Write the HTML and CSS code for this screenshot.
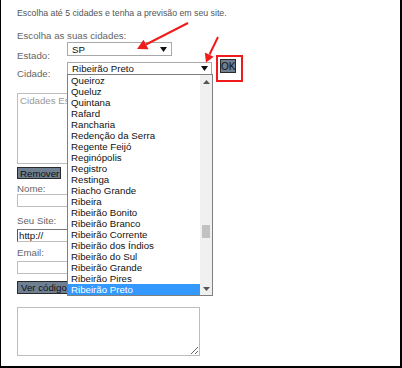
FILE: index.html
```html
<!DOCTYPE html>
<html>
<head>
<meta charset="utf-8">
<link rel="stylesheet" href="styles.css">
</head>
<body>
<div class="frame">
  <div class="form">
    <p class="intro">Escolha até 5 cidades e tenha a previsão em seu site.</p>
    <p class="title">Escolha as suas cidades:</p>
    <div class="row row-estado">
      <span class="label">Estado:</span>
      <div class="select select-sp"><span>SP</span><svg class="caret" width="7" height="5" viewBox="0 0 7 5"><path d="M0 0H7L3.5 5Z"/></svg></div>
    </div>
    <div class="row row-cidade">
      <span class="label">Cidade:</span>
      <div class="select select-cidade"><span>Ribeirão Preto</span><svg class="caret" width="7" height="5" viewBox="0 0 7 5"><path d="M0 0H7L3.5 5Z"/></svg></div>
      <button class="btn btn-ok">OK</button>
    </div>
    <textarea class="area area-cidades" placeholder="Cidades Escolhidas"></textarea>
    <button class="btn btn-remover">Remover</button>
    <p class="field-label lbl-nome">Nome:</p>
    <input class="field" type="text">
    <p class="field-label lbl-site">Seu Site:</p>
    <input class="field field-site" type="text" value="http://">
    <p class="field-label lbl-email">Email:</p>
    <input class="field" type="text">
    <button class="btn btn-ver">Ver código</button>
    <textarea class="area area-code"></textarea>
  </div>

  <div class="dropdown">
    <ul class="options">
      <li>Queiroz</li>
      <li>Queluz</li>
      <li>Quintana</li>
      <li>Rafard</li>
      <li>Rancharia</li>
      <li>Redenção da Serra</li>
      <li>Regente Feijó</li>
      <li>Reginópolis</li>
      <li>Registro</li>
      <li>Restinga</li>
      <li>Riacho Grande</li>
      <li>Ribeira</li>
      <li>Ribeirão Bonito</li>
      <li>Ribeirão Branco</li>
      <li>Ribeirão Corrente</li>
      <li>Ribeirão dos Índios</li>
      <li>Ribeirão do Sul</li>
      <li>Ribeirão Grande</li>
      <li>Ribeirão Pires</li>
      <li class="selected">Ribeirão Preto</li>
    </ul>
    <div class="scrollbar">
      <svg class="sb-arrow" width="7" height="4" viewBox="0 0 7 4"><path d="M0 4H7L3.5 0Z"/></svg>
      <div class="sb-track"><div class="sb-thumb"></div></div>
      <svg class="sb-arrow" width="7" height="4" viewBox="0 0 7 4"><path d="M0 0H7L3.5 4Z"/></svg>
    </div>
  </div>

  <div class="redbox"></div>

  <svg class="arrows" width="402" height="368" viewBox="0 0 402 368">
    <line x1="188" y1="23" x2="146" y2="44.5" stroke="#ee1c1c" stroke-width="2"/>
    <path d="M137 49 L143.5 39.8 L148.5 49.3 Z" fill="#ee1c1c"/>
    <line x1="218" y1="37" x2="209.5" y2="54.5" stroke="#ee1c1c" stroke-width="2"/>
    <path d="M206 62.5 L204.8 52.4 L213.7 56.8 Z" fill="#ee1c1c"/>
  </svg>
</div>
</body>
</html>
```

FILE: styles.css
```css
* { box-sizing: border-box; }

html, body {
  margin: 0;
  padding: 0;
  background: #fff;
}

.frame {
  position: relative;
  width: 402px;
  height: 368px;
  border-left: 1px solid #000;
  border-right: 2px solid #000;
  border-bottom: 2px solid #000;
  font-family: "Liberation Sans", Arial, sans-serif;
  overflow: hidden;
}

.form {
  padding: 8px 0 0 16px;
  display: flex;
  flex-direction: column;
  align-items: flex-start;
}

p { margin: 0; }

.intro {
  font-size: 8.75px;
  line-height: 10px;
  color: #555;
}

.title {
  margin-top: 12px;
  font-size: 9.7px;
  line-height: 11px;
  color: #666;
}

.row {
  display: flex;
  align-items: flex-start;
  font-size: 9.7px;
}

.row-estado {
  margin-top: 1px;
  height: 17px;
}

.row-cidade {
  height: 14px;
}

.label {
  width: 50px;
  color: #666;
  line-height: 11px;
}

.row-estado .label { padding-top: 8px; }
.row-cidade .label { padding-top: 9px; }

.select {
  display: flex;
  align-items: center;
  justify-content: space-between;
  height: 13px;
  border: 1px solid #a9a9a9;
  background: #fff;
  color: #111;
  padding: 0 4px 0 4px;
  font-size: 9.7px;
  line-height: 11px;
}

.select-sp { width: 105px; height: 14px; }
.select-cidade { width: 145px; margin-top: 3px; padding-right: 3px; }

.caret { fill: #111; }

.btn {
  font-family: "Liberation Sans", Arial, sans-serif;
  font-size: 9.7px;
  line-height: 11px;
  color: #111;
  background: #6f7f92;
  border: 1px solid #2a2a2a;
  padding: 0 2px;
  margin: 0;
  border-radius: 0;
}

.btn-ok {
  margin-left: 8px;
  width: 16px;
  height: 14px;
  padding: 0;
  font-size: 10px;
}

.area {
  display: block;
  width: 183px;
  border: 1px solid #bdbdbd;
  font-family: "Liberation Sans", Arial, sans-serif;
  font-size: 9.7px;
  padding: 1px 2px;
  margin: 0;
}

.area::placeholder { color: #9a9a9a; }

.area-cidades {
  margin-top: 20px;
  height: 71px;
}

.btn-remover {
  margin-top: 3px;
  height: 12px;
  width: 44px;
}

.field-label {
  font-size: 9.7px;
  line-height: 10px;
  color: #666;
}

.lbl-nome { margin-top: 5px; }
.lbl-site { margin-top: 9px; }
.lbl-email { margin-top: 6px; }

.field {
  display: block;
  width: 183px;
  height: 13px;
  border: 1px solid #bdbdbd;
  padding: 0 1px;
  margin: 0;
  font-family: "Liberation Sans", Arial, sans-serif;
  font-size: 9.7px;
  color: #111;
}

.lbl-nome + .field { margin-top: 0; }
.lbl-site + .field, .lbl-email + .field { margin-top: 3px; }

.field-site {
  border-color: #777 #bdbdbd #bdbdbd #555;
}

.btn-ver {
  margin-top: 7px;
  height: 13px;
  padding: 0 3px;
}

.area-code {
  margin-top: 13px;
  height: 49px;
}

/* open dropdown list */
.dropdown {
  position: absolute;
  left: 66px;
  top: 74px;
  width: 146px;
  height: 222px;
  border: 1px solid #7f7f7f;
  background: #fff;
  display: flex;
}

.options {
  list-style: none;
  margin: 0;
  padding: 0;
  flex: 1;
  font-size: 9.7px;
  color: #111;
}

.options li {
  height: 11px;
  line-height: 11px;
  padding-left: 3px;
  white-space: nowrap;
}

.options li.selected {
  background: #3399ff;
  color: #fff;
}

.scrollbar {
  width: 12px;
  background: #f0f0f0;
  display: flex;
  flex-direction: column;
  align-items: center;
  padding: 5px 0 4px;
}

.sb-arrow { fill: #555; flex: none; }

.sb-track {
  flex: 1;
  width: 100%;
  position: relative;
}

.sb-thumb {
  position: absolute;
  left: 2px;
  right: 2px;
  top: 141px;
  height: 13px;
  background: #c1c1c1;
}

.redbox {
  position: absolute;
  left: 215px;
  top: 55px;
  width: 27px;
  height: 27px;
  border: 2px solid #ee1c1c;
}

.arrows {
  position: absolute;
  left: -1px;
  top: 0;
  pointer-events: none;
}
```
